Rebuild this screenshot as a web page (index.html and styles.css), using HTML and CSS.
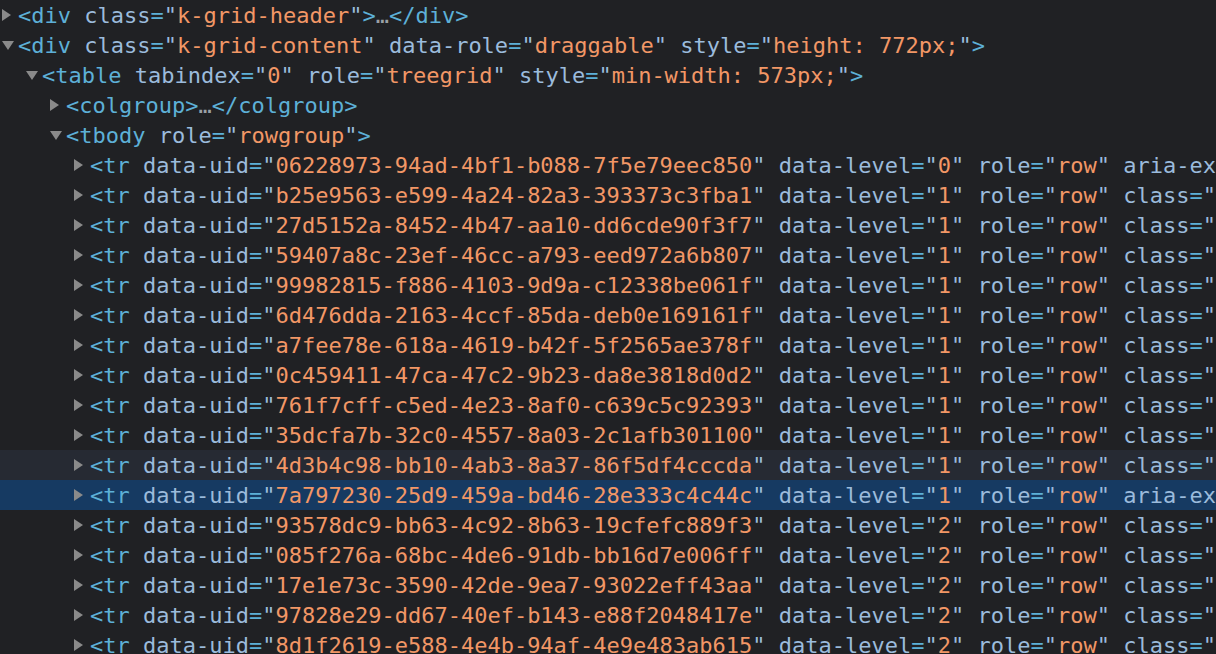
FILE: index.html
```html
<!DOCTYPE html>
<html lang="en">
<head>
    <meta charset="UTF-8">
    <title>Elements</title>
    <link rel="stylesheet" href="styles.css">
</head>
<body>
    <div class="tree">
        <div class="line l0"><span class="arrow closed"></span><span class="code"><span class="t">&lt;div</span> <span class="an">class</span><span class="eq">=</span><span class="q">"</span><span class="av">k-grid-header</span><span class="q">"</span><span class="t">&gt;</span><span class="dots">…</span><span class="t">&lt;/div&gt;</span></span></div>
        <div class="line l0"><span class="arrow open"></span><span class="code"><span class="t">&lt;div</span> <span class="an">class</span><span class="eq">=</span><span class="q">"</span><span class="av">k-grid-content</span><span class="q">"</span> <span class="an">data-role</span><span class="eq">=</span><span class="q">"</span><span class="av">draggable</span><span class="q">"</span> <span class="an">style</span><span class="eq">=</span><span class="q">"</span><span class="av">height: 772px;</span><span class="q">"</span><span class="t">&gt;</span></span></div>
        <div class="line l1"><span class="arrow open"></span><span class="code"><span class="t">&lt;table</span> <span class="an">tabindex</span><span class="eq">=</span><span class="q">"</span><span class="av">0</span><span class="q">"</span> <span class="an">role</span><span class="eq">=</span><span class="q">"</span><span class="av">treegrid</span><span class="q">"</span> <span class="an">style</span><span class="eq">=</span><span class="q">"</span><span class="av">min-width: 573px;</span><span class="q">"</span><span class="t">&gt;</span></span></div>
        <div class="line l2"><span class="arrow closed"></span><span class="code"><span class="t">&lt;colgroup&gt;</span><span class="dots">…</span><span class="t">&lt;/colgroup&gt;</span></span></div>
        <div class="line l2"><span class="arrow open"></span><span class="code"><span class="t">&lt;tbody</span> <span class="an">role</span><span class="eq">=</span><span class="q">"</span><span class="av">rowgroup</span><span class="q">"</span><span class="t">&gt;</span></span></div>
        <div id="rows"></div>
    </div>

    <script>
        let rows = [
            ["06228973-94ad-4bf1-b088-7f5e79eec850", "0", "aria"],
            ["b25e9563-e599-4a24-82a3-393373c3fba1", "1", "class"],
            ["27d5152a-8452-4b47-aa10-dd6cde90f3f7", "1", "class"],
            ["59407a8c-23ef-46cc-a793-eed972a6b807", "1", "class"],
            ["99982815-f886-4103-9d9a-c12338be061f", "1", "class"],
            ["6d476dda-2163-4ccf-85da-deb0e169161f", "1", "class"],
            ["a7fee78e-618a-4619-b42f-5f2565ae378f", "1", "class"],
            ["0c459411-47ca-47c2-9b23-da8e3818d0d2", "1", "class"],
            ["761f7cff-c5ed-4e23-8af0-c639c5c92393", "1", "class"],
            ["35dcfa7b-32c0-4557-8a03-2c1afb301100", "1", "class"],
            ["4d3b4c98-bb10-4ab3-8a37-86f5df4cccda", "1", "class", "hover"],
            ["7a797230-25d9-459a-bd46-28e333c4c44c", "1", "aria", "selected"],
            ["93578dc9-bb63-4c92-8b63-19cfefc889f3", "2", "class"],
            ["085f276a-68bc-4de6-91db-bb16d7e006ff", "2", "class"],
            ["17e1e73c-3590-42de-9ea7-93022eff43aa", "2", "class"],
            ["97828e29-dd67-40ef-b143-e88f2048417e", "2", "class"],
            ["8d1f2619-e588-4e4b-94af-4e9e483ab615", "2", "class"]
        ];
        let html = "";
        rows.forEach(r => {
            // the panel is cut at the right edge, so only the start of the last attribute shows
            let last = r[2] === "class"
                ? '<span class="an">class</span><span class="eq">=</span><span class="q">"</span>'
                : '<span class="an">aria-ex</span>';
            html += '<div class="line l3 ' + (r[3] || '') + '"><span class="arrow closed"></span><span class="code">' +
                '<span class="t">&lt;tr</span> ' +
                '<span class="an">data-uid</span><span class="eq">=</span><span class="q">"</span><span class="av">' + r[0] + '</span><span class="q">"</span> ' +
                '<span class="an">data-level</span><span class="eq">=</span><span class="q">"</span><span class="av">' + r[1] + '</span><span class="q">"</span> ' +
                '<span class="an">role</span><span class="eq">=</span><span class="q">"</span><span class="av">row</span><span class="q">"</span> ' +
                last + '</span></div>';
        });
        document.getElementById("rows").innerHTML = html;
    </script>
</body>
</html>
```

FILE: styles.css
```css
html, body {
    margin: 0;
    background: #202124;
    overflow: hidden;
}
.tree {
    font-family: "DejaVu Sans Mono", "Liberation Mono", monospace;
    font-size: 22px;
    color: #9bbbdc;
}
.line {
    display: flex;
    align-items: center;
    height: 30px;
    overflow: hidden;
}
.code {
    white-space: pre;
}
.l0 { padding-left: 2px; }
.l1 { padding-left: 26px; }
.l2 { padding-left: 50px; }
.l3 { padding-left: 74px; }
.hover { background: #262a33; }
.selected { background: #163a62; }
.arrow {
    flex: none;
    width: 16px;
    height: 12px;
    position: relative;
}
.arrow::before {
    content: "";
    position: absolute;
    width: 0;
    height: 0;
}
.arrow.closed::before {
    left: 0;
    top: 0;
    border-top: 6px solid transparent;
    border-bottom: 6px solid transparent;
    border-left: 9px solid #8a8a8a;
}
.arrow.open::before {
    left: 0;
    top: 2px;
    border-left: 6px solid transparent;
    border-right: 6px solid transparent;
    border-top: 9px solid #8a8a8a;
}
.t { color: #5db0d7; }
.an { color: #9bbbdc; }
.eq { color: #5db0d7; }
.q { color: #9bbbdc; }
.av { color: #f29766; }
.dots { color: #9aa0a6; }
```
